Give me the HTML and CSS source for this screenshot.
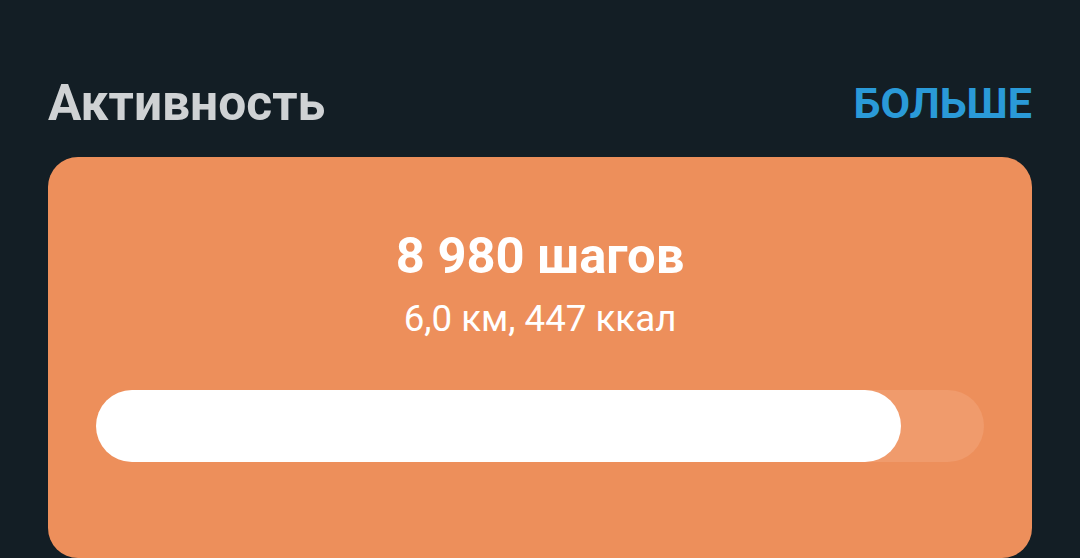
FILE: index.html
```html
<!DOCTYPE html>
<html lang="ru">
<head>
<meta charset="utf-8">
<link rel="stylesheet" href="styles.css">
</head>
<body>
<div class="page">
  <div class="header">
    <h1 class="title">Активность</h1>
    <a class="more">БОЛЬШЕ</a>
  </div>
  <div class="card">
    <div class="steps">8 980 шагов</div>
    <div class="details">6,0 км, 447 ккал</div>
    <div class="track">
      <div class="fill" style="width: 90.65%"></div>
    </div>
  </div>
</div>
</body>
</html>
```
FILE: styles.css
```css
html, body {
  margin: 0;
  padding: 0;
  background: #131e25;
  height: 100%;
  overflow: hidden;
}
.page {
  padding: 0 48px;
  font-family: Roboto, "Noto Sans", sans-serif;
}
.header {
  display: flex;
  justify-content: space-between;
  align-items: center;
  height: 157px;
  padding-top: 50px;
  box-sizing: border-box;
}
.title {
  margin: 0;
  font-size: 49.7px;
  font-weight: 700;
  color: #cfd2d4;
  line-height: 1;
}
.more {
  font-size: 43px;
  font-weight: 700;
  color: #2a9ad8;
  line-height: 1;
}
.card {
  background: #ed8f5b;
  border-radius: 30px;
  height: 401px;
  padding: 74px 48px 0;
  box-sizing: border-box;
  display: flex;
  flex-direction: column;
  align-items: center;
}
.steps {
  font-size: 50.7px;
  font-weight: 700;
  color: #ffffff;
  line-height: 1;
}
.details {
  margin-top: 19px;
  font-size: 36.7px;
  color: #ffffff;
  line-height: 1;
}
.track {
  margin-top: 53px;
  align-self: stretch;
  height: 72px;
  border-radius: 36px;
  background: #f09b6c;
}
.fill {
  height: 100%;
  border-radius: 36px;
  background: #ffffff;
}
```
